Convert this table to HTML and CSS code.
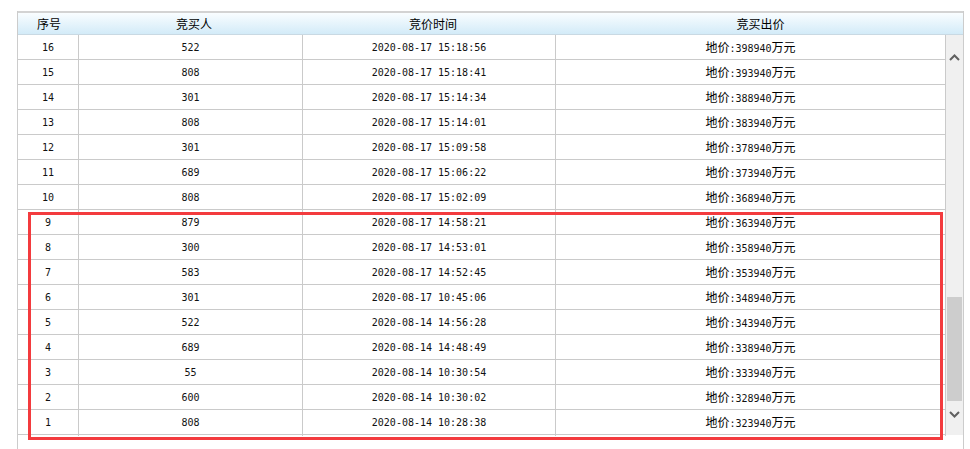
FILE: index.html
```html
<!DOCTYPE html>
<html lang="zh-CN">
<head>
<meta charset="utf-8">
<title>竞价记录</title>
<link rel="stylesheet" href="styles.css">
</head>
<body>
<div class="grid-wrap">
  <div class="head">
    <div class="hc c1">序号</div>
    <div class="hc c2">竞买人</div>
    <div class="hc c3">竞价时间</div>
    <div class="hc c4">竞买出价</div>
  </div>
  <div class="body">
    <div class="rows">
      <div class="row"><div class="m">16</div><div class="m">522</div><div class="m">2020-08-17 15:18:56</div><div>地价<span class="m">:398940</span>万元</div></div>
      <div class="row"><div class="m">15</div><div class="m">808</div><div class="m">2020-08-17 15:18:41</div><div>地价<span class="m">:393940</span>万元</div></div>
      <div class="row"><div class="m">14</div><div class="m">301</div><div class="m">2020-08-17 15:14:34</div><div>地价<span class="m">:388940</span>万元</div></div>
      <div class="row"><div class="m">13</div><div class="m">808</div><div class="m">2020-08-17 15:14:01</div><div>地价<span class="m">:383940</span>万元</div></div>
      <div class="row"><div class="m">12</div><div class="m">301</div><div class="m">2020-08-17 15:09:58</div><div>地价<span class="m">:378940</span>万元</div></div>
      <div class="row"><div class="m">11</div><div class="m">689</div><div class="m">2020-08-17 15:06:22</div><div>地价<span class="m">:373940</span>万元</div></div>
      <div class="row"><div class="m">10</div><div class="m">808</div><div class="m">2020-08-17 15:02:09</div><div>地价<span class="m">:368940</span>万元</div></div>
      <div class="row"><div class="m">9</div><div class="m">879</div><div class="m">2020-08-17 14:58:21</div><div>地价<span class="m">:363940</span>万元</div></div>
      <div class="row"><div class="m">8</div><div class="m">300</div><div class="m">2020-08-17 14:53:01</div><div>地价<span class="m">:358940</span>万元</div></div>
      <div class="row"><div class="m">7</div><div class="m">583</div><div class="m">2020-08-17 14:52:45</div><div>地价<span class="m">:353940</span>万元</div></div>
      <div class="row"><div class="m">6</div><div class="m">301</div><div class="m">2020-08-17 10:45:06</div><div>地价<span class="m">:348940</span>万元</div></div>
      <div class="row"><div class="m">5</div><div class="m">522</div><div class="m">2020-08-14 14:56:28</div><div>地价<span class="m">:343940</span>万元</div></div>
      <div class="row"><div class="m">4</div><div class="m">689</div><div class="m">2020-08-14 14:48:49</div><div>地价<span class="m">:338940</span>万元</div></div>
      <div class="row"><div class="m">3</div><div class="m">55</div><div class="m">2020-08-14 10:30:54</div><div>地价<span class="m">:333940</span>万元</div></div>
      <div class="row"><div class="m">2</div><div class="m">600</div><div class="m">2020-08-14 10:30:02</div><div>地价<span class="m">:328940</span>万元</div></div>
      <div class="row"><div class="m">1</div><div class="m">808</div><div class="m">2020-08-14 10:28:38</div><div>地价<span class="m">:323940</span>万元</div></div>
    </div>
    <div class="sbar">
      <div class="sb-up">
        <svg width="11" height="7" viewBox="0 0 11 7"><polyline points="1,6 5.5,1.5 10,6" fill="none" stroke="#606060" stroke-width="2"/></svg>
      </div>
      <div class="sb-track"><div class="sb-thumb"></div></div>
      <div class="sb-down">
        <svg width="11" height="7" viewBox="0 0 11 7"><polyline points="1,1 5.5,5.5 10,1" fill="none" stroke="#606060" stroke-width="2"/></svg>
      </div>
    </div>
  </div>
  <div class="foot"></div>
  <div class="mark"></div>
</div>
</body>
</html>
```

FILE: styles.css
```css
* { box-sizing: border-box; }
html, body { margin: 0; padding: 0; background: #fff; }
body {
  font-family: "Noto Sans CJK SC", "Liberation Sans", sans-serif;
  font-size: 12px;
  color: #000;
  overflow: hidden;
}
.grid-wrap {
  position: relative;
  margin: 11px 0 0 17px;
  width: 947px;
  border-left: 1px solid #cccccc;
  border-right: 1px solid #cccccc;
}
.head {
  display: grid;
  grid-template-columns: 62px 228px 250px 405px;
  height: 24px;
  border-top: 2px solid #d3d3d3;
  border-bottom: 1px solid #c9d9e3;
  background: linear-gradient(#f9fdff, #d3ebf8);
}
.hc {
  text-align: center;
  line-height: 21px;
  font-size: 12px;
  color: #000;
}
.body {
  display: flex;
  height: 400px;
}
.rows { width: 928px; }
.row {
  display: grid;
  grid-template-columns: 61px 224px 253px 390px;
  height: 25px;
  border-bottom: 1px solid #cacaca;
}
.row > div {
  border-right: 1px solid #cacaca;
  text-align: center;
  line-height: 24px;
  white-space: nowrap;
}
.row > div.m {
  padding-top: 1px;
  line-height: 23px;
}
.m {
  font-family: "DejaVu Sans Mono", "Liberation Mono", monospace;
  font-size: 10px;
  color: #111;
}
.sbar {
  width: 17px;
  display: flex;
  flex-direction: column;
  background: #f0f0f0;
}
.sb-up {
  height: 45px;
  display: flex;
  align-items: center;
  justify-content: center;
}
.sb-track {
  flex: 1;
  display: flex;
  flex-direction: column;
  justify-content: flex-end;
  padding: 0 1px;
}
.sb-thumb {
  height: 104px;
  background: #cdcdcd;
}
.sb-down {
  height: 34px;
  display: flex;
  justify-content: center;
  align-items: flex-start;
  padding-top: 10px;
}
.foot { height: 30px; }
.mark {
  position: absolute;
  left: 10px;
  top: 201px;
  width: 915px;
  height: 228px;
  border: 3px solid #f33b3e;
}
```
